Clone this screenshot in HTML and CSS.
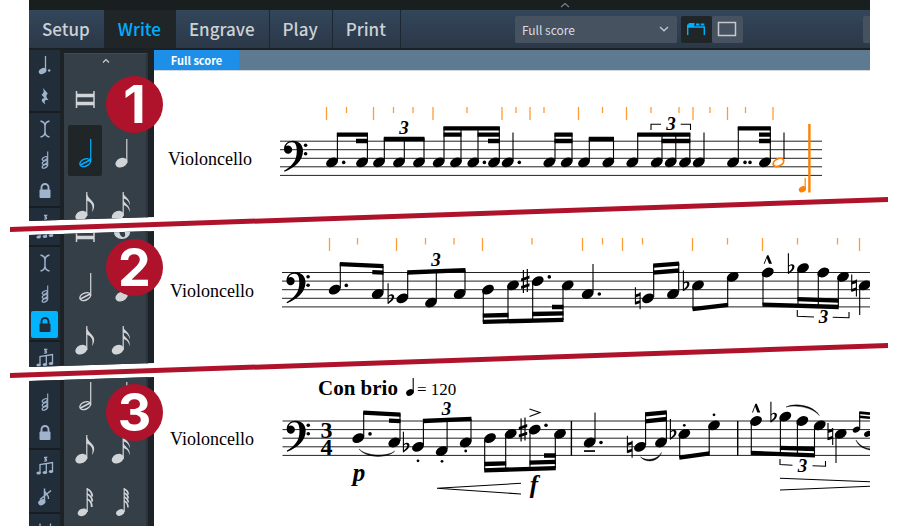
FILE: index.html
```html
<!DOCTYPE html>
<html lang="en">
<head>
  <meta charset="UTF-8" />
  <meta name="viewport" content="width=device-width, initial-scale=1.0"/>
  <title>Write mode - Full score</title>
  <link rel="stylesheet" href="styles.css">
</head>
<body>
  <!-- shared glyphs -->
  <svg class="defs" width="0" height="0" aria-hidden="true">
    <defs>
      <marker id="m-head" markerUnits="userSpaceOnUse" markerWidth="14" markerHeight="12" overflow="visible"><ellipse rx="6.300" ry="4.400" transform="rotate(-28)"/></marker>
      <marker id="m-small" markerUnits="userSpaceOnUse" markerWidth="14" markerHeight="12" overflow="visible"><ellipse rx="3.800" ry="2.700" transform="rotate(-28)"/></marker>
      <marker id="m-dot" markerUnits="userSpaceOnUse" markerWidth="6" markerHeight="6" overflow="visible"><circle r="1.800"/></marker>
      <marker id="m-stacc" markerUnits="userSpaceOnUse" markerWidth="6" markerHeight="6" overflow="visible"><circle r="1.400"/></marker>
      <g id="clef">
        <path d="M4 8C4 3 8 -.2 13 -.2C19 -.2 23 4 23 10C23 20 14 27 4.500 30.800L4 29.800C12 25 16.800 20 16.800 10C16.800 4 15.500 1.200 12 1.200C9 1.200 6.800 2.800 6 5.200A4.100 4.100 0 1 1 4 8.600Z"/>
        <circle cx="25.600" cy="4.200" r="1.800"/><circle cx="25.600" cy="12.800" r="1.800"/>
      </g>
      <g id="flat"><path d="M-2.600 -15V5.500" fill="none" stroke="#000" stroke-width="1.100"/><path d="M-2.600 -2.500C0 -5 4 -4.500 3.400 -1C3 2 0 3.600 -2.600 5.800V4C0 2 1 .5 1.200 -1C1.400 -3.200 -1 -3 -2.600 -1Z"/></g>
      <g id="sharp"><path d="M-1.900 -11V12M2 -12V11" fill="none" stroke="#000" stroke-width="1.200"/><path d="M-4.200 -2.700L4.200 -5.600V-2.600L-4.200 .3ZM-4.200 5L4.200 2.100V5.100L-4.200 8Z"/></g>
      <g id="natural"><path d="M-2.300 -11V6M2.400 -6V11" fill="none" stroke="#000" stroke-width="1.100"/><path d="M-2.300 -3.800L2.400 -5.400V-2.500L-2.300 -.9ZM-2.300 3.500L2.400 1.900V4.800L-2.300 6.400Z"/></g>
      <path id="marcato" d="M-4 8.600L-.6 0H.8L4.300 8.600H1.300L-.9 2.800L-3 8.600Z"/>

      <symbol id="i-dotted" viewBox="0 0 20 20"><path d="M10.500 1V16" fill="none" stroke="currentColor" stroke-width="1.300"/><ellipse cx="7.600" cy="16" rx="4" ry="2.800" transform="rotate(-25 7.600 16)"/><circle cx="14.200" cy="15.500" r="1.200"/></symbol>
      <symbol id="i-rest" viewBox="0 0 20 20"><path d="M7.500 1.500L12.800 7.500C10.800 9.500 11 11 13.500 14.200C10 13.200 8.600 14.500 10.400 18.500C5.500 15.500 5.800 12 9.800 12.400L6.500 8.800C9.300 6.500 9.200 4.800 7.500 1.500Z"/></symbol>
      <symbol id="i-caret" viewBox="0 0 20 20"><path d="M5.500 2C7.500 2.500 10 4 10 7V13C10 16 7.500 17.500 5.500 18M14.500 2C12.500 2.500 10 4 10 7V13C10 16 12.500 17.500 14.500 18" fill="none" stroke="currentColor" stroke-width="1.500"/></symbol>
      <symbol id="i-chord" viewBox="0 0 20 20"><path d="M12.700 1.500V16" stroke="currentColor" stroke-width="1.100"/><g fill="none" stroke="currentColor" stroke-width="1.200"><ellipse cx="9.800" cy="8.500" rx="2.800" ry="1.500" transform="rotate(-28 9.800 8.500)"/><ellipse cx="9.800" cy="12.500" rx="2.800" ry="1.500" transform="rotate(-28 9.800 12.500)"/><ellipse cx="9.800" cy="16.300" rx="2.800" ry="1.500" transform="rotate(-28 9.800 16.300)"/></g></symbol>
      <symbol id="i-lock" viewBox="0 0 20 20"><path d="M6.500 9V6.500a3.500 3.500 0 0 1 7 0V9" fill="none" stroke="currentColor" stroke-width="1.900"/><rect x="4.500" y="8.500" width="11" height="8.500" rx="1"/></symbol>
      <symbol id="i-tuplet" viewBox="0 0 20 20"><path d="M5 17V8.500L17.500 6.500V15M11.300 7.500V16" fill="none" stroke="currentColor" stroke-width="1.300"/><ellipse cx="3.600" cy="17" rx="2.200" ry="1.600"/><ellipse cx="9.900" cy="16.500" rx="2.200" ry="1.600"/><ellipse cx="16" cy="15.500" rx="2.200" ry="1.600"/><path d="M9 1.500H11.500L10.300 3C12.500 3.500 11.500 5.500 9.300 5" fill="none" stroke="currentColor" stroke-width="1.300"/></symbol>
      <symbol id="i-grace" viewBox="0 0 20 20"><path d="M9.500 1.500V15M9.500 4C10.500 7 14 7.500 13.500 12M5 12.500L16 3.500" fill="none" stroke="currentColor" stroke-width="1.500"/><ellipse cx="6.800" cy="15.300" rx="3.800" ry="2.800" transform="rotate(-28 6.800 15.300)"/></symbol>
      <symbol id="i-bars" viewBox="0 0 20 20"><path d="M5 3.500V18M15.500 3.500V18M5 12H15.500" fill="none" stroke="currentColor" stroke-width="1.300"/></symbol>

      <symbol id="n-breve" viewBox="0 0 24 30"><path d="M3.500 6V23M21 6V23" stroke="currentColor" stroke-width="1.500"/><path d="M3.500 10.500H21M3.500 18.500H21" stroke="currentColor" stroke-width="3.600"/></symbol>
      <symbol id="n-whole" viewBox="0 0 24 30"><path fill-rule="evenodd" d="M12 7C16.500 7 20 10 20 13.500S16.500 20 12 20S4 17 4 13.500S7.500 7 12 7ZM10 9C8 10 9.500 18 13.500 18.200C17 18 14.500 8 10 9Z"/></symbol>
      <symbol id="n-half" viewBox="0 0 24 30"><path d="M17.700 1V24" stroke="currentColor" stroke-width="1.200"/><ellipse cx="12.200" cy="24.600" rx="5.600" ry="3.500" transform="rotate(-25 12.200 24.600)" fill="none" stroke="currentColor" stroke-width="1.500"/><path d="M7.500 27L17 22" stroke="currentColor" stroke-width="1.500"/></symbol>
      <symbol id="n-quarter" viewBox="0 0 24 30"><path d="M16.800 1V25" stroke="currentColor" stroke-width="1.200"/><ellipse cx="11.400" cy="24.700" rx="6.200" ry="4.500" transform="rotate(-25 11.400 24.700)"/></symbol>
      <symbol id="n-8" viewBox="0 0 24 30"><path d="M13.800 1V25" stroke="currentColor" stroke-width="1.200"/><ellipse cx="8.300" cy="24.700" rx="6.200" ry="4.500" transform="rotate(-25 8.300 24.700)"/><path d="M13.500 1C14 8 21.500 9.500 21.200 15C21 18.500 19.500 20 19 21C20.500 15 19 11.500 13.500 9.500Z"/></symbol>
      <symbol id="n-16" viewBox="0 0 24 30"><path d="M13.200 1V25" stroke="currentColor" stroke-width="1.200"/><ellipse cx="7.700" cy="24.700" rx="6.200" ry="4.500" transform="rotate(-25 7.700 24.700)"/><path d="M13 1C13.500 6 20.500 7 20 14.500C18.500 9.500 16 8 13 7.500ZM13 8C13.500 13 21 13.500 19.500 21.500C19 16.500 16 14.500 13 14Z"/></symbol>
      <symbol id="n-32" viewBox="0 0 24 30"><path d="M14.200 1V25" stroke="currentColor" stroke-width="1.200"/><ellipse cx="9.500" cy="25.300" rx="5" ry="3.600" transform="rotate(-25 9.500 25.300)"/><path d="M14 2Q19 4 19.300 9.500M14 7Q19 9 19.300 14.500M14 12Q19 14 18.800 20" fill="none" stroke="currentColor" stroke-width="1.800"/></symbol>
      <symbol id="n-64" viewBox="0 0 24 30"><path d="M14.200 1V25" stroke="currentColor" stroke-width="1.200"/><ellipse cx="10.200" cy="25.500" rx="4.300" ry="3.100" transform="rotate(-25 10.200 25.500)"/><path d="M14 2Q18 3.500 18.300 7.500M14 6Q18 7.500 18.300 11.500M14 10Q18 11.500 18.300 15.500M14 14Q18 15.500 18 20.500" fill="none" stroke="currentColor" stroke-width="1.500"/></symbol>
    </defs>
  </svg>

  <main class="window">
    <div class="titlebar">
      <svg width="10" height="6" viewBox="0 0 10 6"><path d="M1 5L5 1.500L9 5" fill="none" stroke="#6f8192" stroke-width="1.300"/></svg>
    </div>

    <header class="toolbar">
      <nav class="modes">
        <button>Setup</button>
        <button class="current">Write</button>
        <button>Engrave</button>
        <button>Play</button>
        <button>Print</button>
      </nav>
      <div class="view">
        <div class="layout-select">
          <select aria-label="Layout"><option>Full score</option></select>
          <svg width="10" height="6" viewBox="0 0 10 6"><path d="M1 1L5 4.800L9 1" fill="none" stroke="#c3c8cd" stroke-width="1.300"/></svg>
        </div>
        <div class="view-buttons">
          <button class="current" aria-label="Galley view"><svg width="20" height="14" viewBox="0 0 20 14"><path d="M1.700 13V5H18.300V13" fill="none" stroke="currentColor" stroke-width="1.400"/><path d="M1 2.500H2L3 1H8.500V5H1ZM10 1.500h3.500v2H10ZM14.800 1.500h3.500v2H14.800Z"/></svg></button>
          <button aria-label="Page view"><svg width="20" height="16" viewBox="0 0 20 16"><path d="M1.500 1.500H18.500V14.500H1.500Z" fill="none" stroke="currentColor" stroke-width="1.500"/></svg></button>
        </div>
      </div>
      <button class="more" aria-label="More"></button>
    </header>

    <section class="band band-1">
      <aside class="sidebar">
        <div class="rail"><div class="rail-items">
          <button aria-label="Dots"><svg><use href="#i-dotted"/></svg></button>
          <button aria-label="Rests"><svg><use href="#i-rest"/></svg></button>
          <hr>
          <button aria-label="Insert"><svg><use href="#i-caret"/></svg></button>
          <button aria-label="Chords"><svg><use href="#i-chord"/></svg></button>
          <button aria-label="Lock to duration"><svg><use href="#i-lock"/></svg></button>
          <hr>
          <button aria-label="Tuplets"><svg><use href="#i-tuplet"/></svg></button>
        </div></div>
        <div class="panel">
          <button class="collapse" aria-label="Collapse"><svg width="8" height="6" viewBox="0 0 8 6"><path d="M1 4.500L4 1.500L7 4.500" fill="none" stroke="#ccd1d5" stroke-width="1.200"/></svg></button>
          <div class="notes">
            <button aria-label="Breve"><svg><use href="#n-breve"/></svg></button>
            <button aria-label="Whole note"><svg><use href="#n-whole"/></svg></button>
            <button class="current" aria-label="Half note"><svg><use href="#n-half"/></svg></button>
            <button aria-label="Quarter note"><svg><use href="#n-quarter"/></svg></button>
            <button aria-label="Eighth note"><svg><use href="#n-8"/></svg></button>
            <button aria-label="16th note"><svg><use href="#n-16"/></svg></button>
          </div>
        </div>
      </aside>
      <div class="page">
        <div class="tabs"><button>Full score</button></div>
        <div class="score">
          <p class="part">Violoncello</p>
          <svg class="music" width="600" height="150" viewBox="270 71 600 150">
            <path class="ticks" d="M326.500 107v13M373.500 107v13M433 107v13M502 107v13M530 107v13M578.500 107v13M626.500 107v13M693 107v13M727.500 107v13M773 107v13M346.500 107v6M393.500 107v6M413 107v6M467 107v6M516 107v6M544 107v6M602.500 107v6M651 107v6M679 107v6M710 107v6M745.500 107v6"/>
            <path class="staff" d="M280 141.200H822M280 149.700H822M280 158.300H822M280 166.800H822M280 175.400H822"/>
            <use href="#clef" x="280" y="141"/>
            <polyline class="heads" points="332,162.400 362,162.400 379,162.400 399,162.400 419,162.400 438.700,162.400 456,162.400 473.300,162.400 494,162.400 507.700,162.400 549.300,162.400 566.700,162.400 584,162.400 608.300,162.400 632.300,162.400 656.700,162.400 670.700,162.400 685,162.400 698.700,162.400 733,162.400 765,162.400"/>
            <path class="stems" d="M337.400 161V133M367.400 161V133M384.300 161V138M404.300 161V138M424 161V138M444 161V127M461 161V127M478 161V127M499.300 161V127M513 161V132.500M555 161V133M572 161V133M589.300 161V138M613.500 161V138M637.700 161V133M662 161V133M675.800 161V133M689.800 161V133M704 161V132.500M738.300 161V127M770.300 161V127M784 159V132.500"/>
            <path class="beams" d="M336.900 134.600H367.900M356 141H367.900M383.800 139H424.500M443.500 128.300H499.800M443.500 134.600H461.500M477.500 134.600H499.800M488 141H499.800M554.500 134.600H572.500M554.500 141H572.500M588.800 139H614M637.200 134.600H690.300M661.500 141H690.300M737.800 128.300H770.800M759 134.600H770.800M759 141H770.800"/>
            <polyline class="dots" points="343.700,162.400 484.400,162.400 519.300,162.400 745,162.400 750,162.400"/>
            <text class="tuplet" x="404" y="134">3</text>
            <text class="tuplet" x="671" y="130">3</text>
            <path class="stems" d="M651 130V124.300H661M680.700 124.300H690.500V130"/>
            <g class="input-caret">
              <ellipse cx="778.500" cy="162.400" rx="5.600" ry="3.500" transform="rotate(-28 778.500 162.400)" fill="#fff" stroke-width="1.800"/>
              <path d="M809.400 124V192.500" stroke-width="2.400"/>
              <path d="M805.200 178V189" stroke-width="1.200"/>
              <ellipse cx="802.400" cy="189.300" rx="3.200" ry="2.400" transform="rotate(-28 802.400 189.300)" fill="#ff8000"/>
            </g>
          </svg>
        </div>
      </div>
      <span class="badge">1</span>
    </section>

    <section class="band band-2">
      <svg class="cut" viewBox="0 0 878 36" preserveAspectRatio="none"><path d="M0 29L878 -1V4L0 34Z"/></svg>
      <aside class="sidebar">
        <div class="rail"><div class="rail-items">
          <button aria-label="Tuplets"><svg><use href="#i-tuplet"/></svg></button>
          <hr>
          <button aria-label="Insert"><svg><use href="#i-caret"/></svg></button>
          <button aria-label="Chords"><svg><use href="#i-chord"/></svg></button>
          <button class="current" aria-label="Lock to duration"><svg><use href="#i-lock"/></svg></button>
          <hr>
          <button aria-label="Tuplets"><svg><use href="#i-tuplet"/></svg></button>
        </div></div>
        <div class="panel">
          <div class="notes">
            <button aria-label="Breve"><svg><use href="#n-breve"/></svg></button>
            <button aria-label="Whole note"><svg><use href="#n-whole"/></svg></button>
            <button aria-label="Half note"><svg><use href="#n-half"/></svg></button>
            <button aria-label="Quarter note"><svg><use href="#n-quarter"/></svg></button>
            <button aria-label="Eighth note"><svg><use href="#n-8"/></svg></button>
            <button aria-label="16th note"><svg><use href="#n-16"/></svg></button>
          </div>
        </div>
      </aside>
      <div class="page">
        <div class="score">
          <p class="part">Violoncello</p>
          <svg class="music" width="600" height="136" viewBox="270 231 600 136">
            <path class="ticks" d="M329.500 238v13M396.500 238v13M482.500 238v13M582.500 238v13M622.500 238v13M692.500 238v13M762.500 238v13M859.500 238v13M357.500 238v6.500M425.500 238v6.500M454 238v6.500M532 238v6.500M602.500 238v6.500M642.500 238v6.500M727.500 238v6.500M797.500 238v6.500M837.500 238v6.500"/>
            <path class="staff" d="M282 272.500H870M282 281.100H870M282 289.700H870M282 298.300H870M282 306.900H870"/>
            <use href="#clef" x="282.500" y="272.500"/>
            <polyline class="heads" points="334.700,289.700 377.700,294 402.300,298.300 431,302.600 459.700,294 488,289.700 513,285.400 537.700,281.100 567.700,285.400 587.700,294 648,298.300 673,294 698,285.400 732.700,276.800 767.700,272.500 803,268.200 823.300,272.500 843,276.800 864.700,285.400"/>
            <path class="stems" d="M340.300 288V263M383 292V266M407.700 297V272M436.300 301V271M465 292V270M483.300 291V322M508 287V321M532.700 283V320M563 287V320M593 292V264M653.700 297V265M678.700 292V263M693 287V309M727.700 278V305M763 274V305M798 270V305M818.300 274V306M838.300 278V307M859.700 287V315"/>
            <path class="beams" d="M339.800 264.200L383.500 266.200M372.300 272.200L383.500 272.600M407.200 272.500L465.500 270.200M482.800 321.900L563.500 319.800M482.800 315.600L508.500 315M532.200 314L563.500 313.300M552 307H563.500M653.200 265.700L679.200 263.700M653.200 272.700L679.200 270.500M692.500 309.100L728.200 304.900M762.500 304.700L838.800 307M797.500 299.200L838.800 300.600"/>
            <polyline class="dots" points="346.300,285.400 549.300,276.900 599.300,294"/>
            <use href="#flat" x="390.700" y="298.300"/><use href="#flat" x="686" y="285.400"/><use href="#flat" x="791" y="268.200"/>
            <use href="#sharp" x="525.300" y="281.100"/>
            <use href="#natural" x="637.700" y="298.300"/><use href="#natural" x="854" y="285.400"/>
            <use href="#marcato" x="767.700" y="255.200"/>
            <text class="tuplet" x="436" y="266">3</text>
            <text class="tuplet" x="823.500" y="323">3</text>
            <path class="stems" d="M797.300 310V316.300L814 317M832.700 317.300L849 317.800V312"/>
          </svg>
        </div>
      </div>
      <span class="badge">2</span>
    </section>

    <section class="band band-3">
      <svg class="cut" viewBox="0 0 878 36" preserveAspectRatio="none"><path d="M0 29L878 -1V4L0 34Z"/></svg>
      <aside class="sidebar">
        <div class="rail"><div class="rail-items">
          <button aria-label="Chords"><svg><use href="#i-chord"/></svg></button>
          <button aria-label="Lock to duration"><svg><use href="#i-lock"/></svg></button>
          <hr>
          <button aria-label="Tuplets"><svg><use href="#i-tuplet"/></svg></button>
          <button aria-label="Grace notes"><svg><use href="#i-grace"/></svg></button>
          <hr>
          <button aria-label="Bars"><svg><use href="#i-bars"/></svg></button>
        </div></div>
        <div class="panel">
          <div class="notes">
            <button aria-label="Half note"><svg><use href="#n-half"/></svg></button>
            <button aria-label="Quarter note"><svg><use href="#n-quarter"/></svg></button>
            <button aria-label="Eighth note"><svg><use href="#n-8"/></svg></button>
            <button aria-label="16th note"><svg><use href="#n-16"/></svg></button>
            <button aria-label="32nd note"><svg><use href="#n-32"/></svg></button>
            <button aria-label="64th note"><svg><use href="#n-64"/></svg></button>
          </div>
        </div>
      </aside>
      <div class="page">
        <div class="score">
          <p class="part">Violoncello</p>
          <svg class="music" width="600" height="149" viewBox="270 377 600 149">
            <text class="tempo" x="318" y="395">Con brio</text>
            <path class="stems" d="M413.200 378V392"/><ellipse cx="410" cy="392.500" rx="4" ry="3" transform="rotate(-28 410 392.500)"/>
            <text class="metronome" x="417" y="395">= 120</text>
            <path class="staff" d="M282.500 421H870M282.500 429.600H870M282.500 438.200H870M282.500 446.800H870M282.500 455.400H870"/>
            <use href="#clef" x="282.700" y="421"/>
            <text class="meter" x="326.500" y="438">3</text>
            <text class="meter" x="326.500" y="455">4</text>
            <path class="barlines" d="M571.400 421V455.400M737.700 421V455.400"/>
            <polyline class="heads" points="358.300,438.200 394.300,442.500 418,446.800 441.700,451.100 465.700,442.500 490,438.200 510.700,433.900 534.700,429.600 560,433.900 589.700,442.500 640,446.800 661,442.500 684.300,433.900 714,425.300 756,421 785.300,416.700 802.300,421 819.700,425.300 840.700,433.900"/>
            <polyline class="heads-small" points="856.300,429.600 867.700,433.900"/>
            <path class="stems" d="M363.700 437V412M400 441V414M423.400 445V421M447.100 449V420M471 441V419M484.700 440V470M505.700 436V470M530 431V469M555.300 436V468M595 441V412.500M645.600 445V414M666.400 441V412M679.700 436V457M709.200 427V453M751.300 423V453M780.400 418V453M797.400 423V454M814.500 427V455M836 436V463M859.700 429V412"/>
            <path class="beams" d="M363.200 412.600L400.500 414.600M389 420.700L400.500 421.100M422.900 421L471.500 418.900M484.200 470.300L555.800 468.100M484.200 464L506.200 463.400M529.500 462.600L555.800 461.900M544 455.500H555.800M645.100 414.400L666.900 412.300M645.100 421.300L666.900 419M679.200 457.600L709.700 453.300M750.800 452.900L815 455.300M779.900 447.800L815 449"/>
            <path class="beams-small" d="M859.300 412.600L870 413.600M859.300 416.800L870 417.800"/>
            <polyline class="dots" points="370,433.900 546,425.300 601,442.500"/>
            <polyline class="staccato" points="418,460.800 442,461.300 465.700,451 684.300,425.300 714,414.800"/>
            <path d="M584 450.200H595V451.900H584Z"/>
            <use href="#flat" x="406" y="446.800"/><use href="#flat" x="673" y="433.900"/><use href="#flat" x="773.500" y="416.700"/>
            <use href="#sharp" x="523" y="429.600"/>
            <use href="#natural" x="629.700" y="446.800"/><use href="#natural" x="830.300" y="433.900"/>
            <use href="#marcato" x="756" y="403.800"/>
            <path d="M359 449C366 456.500 388 457 394.800 451C388 458.500 366 458.500 359 449ZM640.500 457C646 461 657 460.500 661.500 452.500C658 462.500 646 463 640.500 457ZM786 407C795 402.500 813 405 819.400 415.500C812 407 796 404.500 786 407ZM856 440C858 446 864 449 870 450V448.800C864 448 859 445 856 440Z" stroke="#000" stroke-width=".4"/>
            <path class="stems" d="M529.500 409L540 412.500L529.500 416.500M521 483.300L437 488.300L521 494M780 478.300L870 481.700M780 490L870 486.300M780 459V464.500L792.500 465.300M812.500 465.800L825.500 466.300V461"/>
            <text class="tuplet" x="446.500" y="415">3</text>
            <text class="tuplet" x="802.500" y="472">3</text>
            <text class="dynamic" x="359" y="481">p</text>
            <text class="dynamic" x="534" y="493">f</text>
          </svg>
        </div>
      </div>
      <span class="badge">3</span>
    </section>
  </main>
</body>
</html>
```
FILE: styles.css
```css
:root {
  --dark: #1c2226;
  --rail: #222d3a;
  --panel: #353f48;
  --icon: #9fb3cc;
  --note: #d2d5d8;
  --accent: #00aeff;
  --red: #ae132b;
  --orange: #ff8000;
}
* {
  box-sizing: border-box;
}
body {
  margin: 0;
  background: #fff;
  color: #000;
  font-family: "Noto Sans CJK SC", "Noto Sans", sans-serif;
}
button {
  margin: 0;
  padding: 0;
  border: none;
  background: none;
  font-family: inherit;
  color: inherit;
}
svg {
  display: block;
  fill: currentColor;
}
.defs {
  position: absolute;
}
.window {
  margin: 0 30px 0 29px;
}

/* Top bars */
.titlebar {
  height: 10px;
  padding: 2px 0 0 531px;
  background: #191e1f;
}
.toolbar {
  display: flex;
  align-items: center;
  height: 40px;
  background: linear-gradient(#33465a, #2b3848);
  border-bottom: 2px solid #1b2024;
}
.modes {
  display: flex;
  align-self: stretch;
}
.modes button {
  padding: 0 14px 0 13px;
  border-right: 1px solid #1d2731;
  font-size: 17px;
  font-weight: 500;
  line-height: 36px;
  color: #ccd1d6;
}
.modes .current {
  background: #202628;
  color: var(--accent);
}
.view {
  display: flex;
  gap: 4px;
  margin-left: 114px;
}
.layout-select {
  display: flex;
  align-items: center;
  width: 162px;
  height: 27px;
  padding-right: 8px;
  border-radius: 2px;
  background: #465260;
}
.layout-select select {
  flex: 1;
  height: 27px;
  padding: 0 7px;
  border: none;
  background: none;
  appearance: none;
  font-family: inherit;
  font-size: 12px;
  color: #dadde0;
}
.view-buttons {
  display: flex;
}
.view-buttons button {
  display: flex;
  align-items: center;
  justify-content: center;
  width: 31px;
  height: 27px;
  border-radius: 2px;
  background: #465260;
  color: #c6c9cc;
}
.view-buttons .current {
  background: #202628;
  color: var(--accent);
}
.more {
  width: 7px;
  height: 27px;
  margin-left: auto;
  border-radius: 2px 0 0 2px;
  background: #465260;
}

/* Bands */
.band {
  position: relative;
  display: flex;
}
.band-1 { height: 171px; }
.band-2 { height: 136px; margin-top: 10px; }
.band-3 { height: 149px; margin-top: 10px; }
.cut {
  position: absolute;
  left: -19px;
  top: -33px;
  width: calc(100% + 37px);
  height: 36px;
  overflow: visible;
  fill: var(--red);
  z-index: 1;
}
.badge {
  position: absolute;
  left: 77px;
  width: 57px;
  height: 57px;
  border-radius: 50%;
  background: var(--red);
  color: #fff;
  font-family: Inter, sans-serif;
  font-size: 52px;
  font-weight: 700;
  line-height: 57px;
  text-align: center;
  z-index: 2;
}
.band-1 .badge { top: 26px; }
.band-2 .badge { top: 8px; }
.band-3 .badge { top: 7px; }

/* Sidebar */
.sidebar {
  display: flex;
  flex: none;
  width: 125px;
  background: var(--dark);
}
.band-1 .sidebar { clip-path: polygon(0 0, 100% 0, 100% calc(100% - 4px), 0 100%); }
.band-2 .sidebar { clip-path: polygon(0 4px, 100% 0, 100% calc(100% - 4px), 0 100%); }
.band-3 .sidebar { clip-path: polygon(0 4px, 100% 0, 100% 100%, 0 100%); }
.rail {
  width: 31px;
  margin-right: 4px;
  overflow: hidden;
  background: var(--rail);
  color: var(--icon);
}
.band-1 .rail-items { margin-top: -1px; }
.band-2 .rail-items { margin-top: -17px; }
.band-3 .rail-items { margin-top: 9px; }
.rail button {
  display: flex;
  align-items: center;
  justify-content: center;
  width: 31px;
  height: 31px;
}
.rail svg {
  width: 20px;
  height: 20px;
}
.rail .current {
  width: 27px;
  height: 27px;
  margin: 2px;
  border-radius: 2px;
  background: #00b4ff;
  color: var(--rail);
}
.rail hr {
  height: 2px;
  margin: 0;
  border: none;
  background: #171d22;
}
.panel {
  width: 84px;
  overflow: hidden;
  background: var(--panel);
  border-right: 2px solid #2b333c;
}
.band-1 .panel {
  margin-top: 3px;
  border-top: 1px solid #404a53;
}
.collapse {
  display: flex;
  align-items: center;
  justify-content: center;
  width: 84px;
  height: 14px;
  margin-bottom: 4px;
}
.notes {
  display: grid;
  grid-template-columns: 34px 34px;
  gap: 2px 3px;
  padding-left: 4px;
  color: var(--note);
}
.band-2 .notes { margin-top: -25px; }
.band-3 .notes { margin-top: -9px; }
.notes button {
  display: flex;
  justify-content: center;
  height: 51px;
  padding-top: 13px;
  border-radius: 2px;
}
.notes svg {
  width: 24px;
  height: 30px;
}
.notes .current {
  background: #202628;
  color: var(--accent);
}

/* Score */
.page {
  flex: 1;
  min-width: 0;
}
.tabs {
  display: flex;
  height: 21px;
  background: #5d7a90;
  border-bottom: 1px solid #cfd8df;
}
.tabs button {
  width: 85px;
  background: #1e8fe8;
  color: #fff;
  font-size: 11px;
  font-weight: 700;
  line-height: 18px;
}
.score {
  display: flex;
  overflow: hidden;
}
.part {
  flex: none;
  width: 116px;
  margin: 0;
  padding-left: 16px;
  font-family: "Liberation Serif", serif;
  font-size: 18px;
  line-height: 24px;
}
.band-1 .part { padding-top: 76px; padding-left: 14px; }
.band-2 .part { padding-top: 48px; }
.band-3 .part { padding-top: 50px; }
.music {
  flex: none;
  font-family: "Liberation Serif", serif;
}
.staff {
  stroke: #222;
  stroke-width: 1;
}
.stems {
  fill: none;
  stroke: #000;
  stroke-width: 1.1;
}
.barlines {
  stroke: #000;
  stroke-width: 1.4;
}
.beams {
  stroke: #000;
  stroke-width: 4.3;
}
.beams-small {
  stroke: #000;
  stroke-width: 2.6;
}
.ticks {
  stroke: #ff9c3a;
  stroke-width: 1.3;
}
.input-caret {
  fill: none;
  stroke: var(--orange);
}
.heads, .heads-small, .dots, .staccato {
  fill: none;
}
.heads { marker: url(#m-head); }
.heads-small { marker: url(#m-small); }
.dots { marker: url(#m-dot); }
.staccato { marker: url(#m-stacc); }
.tuplet {
  font-size: 19px;
  font-weight: 700;
  font-style: italic;
  text-anchor: middle;
}
.meter {
  font-size: 24px;
  font-weight: 700;
  text-anchor: middle;
}
.tempo {
  font-size: 21px;
  font-weight: 700;
}
.metronome {
  font-size: 17px;
}
.dynamic {
  font-size: 25px;
  font-weight: 700;
  font-style: italic;
  text-anchor: middle;
}
```
